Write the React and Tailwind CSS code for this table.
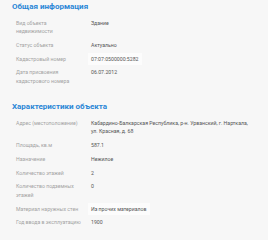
import React from "react";

const general = [
  { label: "Вид объекта недвижимости", value: "Здание" },
  { label: "Статус объекта", value: "Актуально" },
  { label: "Кадастровый номер", value: "07:07:0500000:5282", hl: true },
  { label: "Дата присвоения кадастрового номера", value: "06.07.2012" },
];

const specs = [
  {
    label: "Адрес (местоположение)",
    value:
      "Кабардино-Балкарская Республика, р-н. Урванский, г. Нарткала, ул. Красная, д. 68",
  },
  { label: "Площадь, кв.м", value: "587.1" },
  { label: "Назначение", value: "Нежилое" },
  { label: "Количество этажей", value: "2" },
  { label: "Количество подземных этажей", value: "0" },
  { label: "Материал наружных стен", value: "Из прочих материалов", hl: true },
  { label: "Год ввода в эксплуатацию", value: "1900" },
];

function Row({ label, value, hl }) {
  return (
    <div className="flex py-[2.5px] pl-[16px]">
      <div className="w-[67px] mr-[8px] shrink-0 text-[#a3a3a3]">{label}</div>
      <div className="w-[158px]">
        <span className={hl ? "bg-[#fcfcfc] -mx-[3px] px-[3px] py-[3px]" : ""}>
          {value}
        </span>
      </div>
    </div>
  );
}

function Section({ title, rows }) {
  return (
    <div>
      <h2 className="pl-[12px] text-[8px] leading-[12px] font-bold text-[#2a86d6]">
        {title}
      </h2>
      <div className="mt-[3px] text-[5.2px] leading-[8.7px] text-[#555]">
        {rows.map((r) => (
          <Row key={r.label} {...r} />
        ))}
      </div>
    </div>
  );
}

export default function App() {
  return (
    <div
      className="flex w-[270px] h-[240px] overflow-hidden bg-[#f7f7f7]"
      style={{ fontFamily: "Roboto, 'Liberation Sans', sans-serif" }}
    >
      <div className="flex-1 pt-[1px]">
        <Section title="Общая информация" rows={general} />
        <div className="h-[13px]" />
        <Section title="Характеристики объекта" rows={specs} />
      </div>
      <div className="w-[2px] bg-white" />
    </div>
  );
}
